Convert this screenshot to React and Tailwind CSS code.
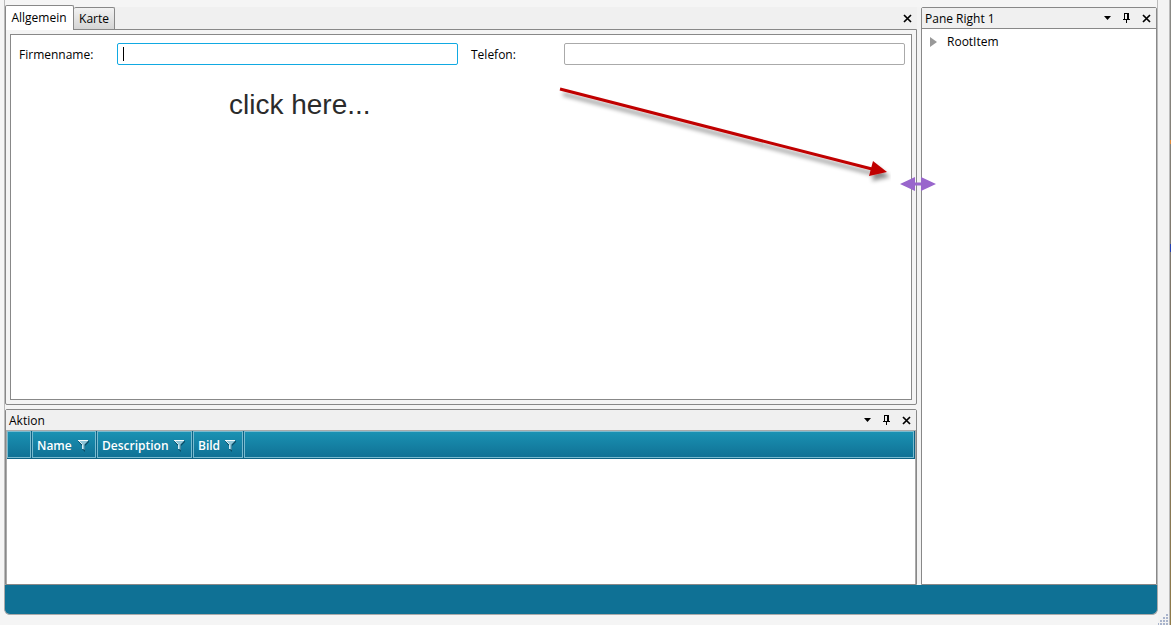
import React from "react";

const CloseIcon = () => (
  <svg width="9" height="9" viewBox="0 0 9 9" fill="none" stroke="#000" strokeWidth="1.7">
    <path d="M1 1l7 7M8 1L1 8" />
  </svg>
);

const PinIcon = () => (
  <svg width="7" height="10" viewBox="0 0 7 10" shapeRendering="crispEdges">
    <path d="M1 0h5v6h1v1H4v3H3V7H0V6h1zM2 1v5h2V1z" fill="#000" fillRule="evenodd" />
  </svg>
);

const CaretIcon = () => (
  <svg width="7" height="4" viewBox="0 0 7 4">
    <path d="M0 0h7L3.5 4z" fill="#000" />
  </svg>
);

const FilterIcon = () => (
  <svg width="11" height="12" viewBox="0 0 11 12">
    <path d="M0 1h11v1L7 6v6L4 9V6z" fill="#0b4d66" />
    <path d="M1 1h9L6.500 4.500V10L4.500 8.500v-4z" fill="#8cc3d6" />
    <path d="M0 0h10v1H0z" fill="#f2fafc" />
    <path d="M1 1l3.500 3.500V9" fill="none" stroke="#d5ebf2" />
  </svg>
);

const PaneHeader = ({ title }) => (
  <div className="flex h-5 items-center justify-between bg-[#f0f0f0] pr-[5px] pl-[3px]">
    <h2 className="pt-0.5">{title}</h2>
    <div className="flex items-center gap-3">
      <button type="button" aria-label="Menu" className="flex h-4 items-center">
        <CaretIcon />
      </button>
      <button type="button" aria-label="Pin" className="flex h-4 items-center">
        <PinIcon />
      </button>
      <button type="button" aria-label="Close" className="flex h-4 items-center">
        <CloseIcon />
      </button>
    </div>
  </div>
);

const columns = [
  { label: "Name", width: "w-[65px]" },
  { label: "Description", width: "w-24" },
  { label: "Bild", width: "w-[51px]" },
];

const headCell = "border-r border-b border-[#0d6385] shadow-[inset_0_0_0_1px_#79bbd0]";

const ActionGrid = () => (
  <table className="w-full table-fixed border-separate border-spacing-0">
    <thead>
      <tr className="h-7 bg-linear-to-b from-[#1b93b4] to-[#0f6f93] text-left text-white">
        <th className={`${headCell} w-[25px]`} aria-label="Row" />
        {columns.map((col) => (
          <th key={col.label} className={`${headCell} ${col.width} pt-0.5 pr-[7px] pb-0 pl-[5px] font-semibold`}>
            <span className="flex items-center justify-between">
              {col.label}
              <FilterIcon />
            </span>
          </th>
        ))}
        <th className={headCell} aria-label="Filler" />
      </tr>
    </thead>
  </table>
);

const ArrowNote = () => (
  <svg
    className="pointer-events-none absolute top-12 right-5"
    width="340"
    height="104"
    viewBox="0 0 340 104"
  >
    <defs>
      <filter id="shadow" x="-10%" y="-20%" width="120%" height="150%">
        <feDropShadow dx="3" dy="5" stdDeviation="2" floodColor="#000" floodOpacity="0.45" />
      </filter>
    </defs>
    <g filter="url(#shadow)">
      <path d="M9 6l312 80" stroke="#c00000" strokeWidth="3" />
      <path d="M322 78l14 11-18 4z" fill="#c00000" />
    </g>
  </svg>
);

const MainPanel = () => (
  <section className="flex min-h-0 flex-1 flex-col">
    <div className="flex h-[22px] items-end bg-[#f0f0f0]" role="tablist">
      <button
        type="button"
        role="tab"
        aria-selected="true"
        className="relative z-10 -mt-1 -mb-px h-[25px] w-[69px] rounded-t-xs border border-b-0 border-[#888] bg-white pr-px"
      >
        Allgemein
      </button>
      <button
        type="button"
        role="tab"
        aria-selected="false"
        className="h-[22px] w-[41px] rounded-t-xs border border-b-0 border-l-0 border-[#888] bg-linear-to-b from-[#f2f2f2] to-[#d5d5d5]"
      >
        Karte
      </button>
      <button type="button" aria-label="Close" className="mr-[5px] ml-auto flex h-[22px] items-center">
        <CloseIcon />
      </button>
    </div>
    <div className="flex flex-1 rounded-b-xs border border-[#888] bg-[#f4f4f4] p-1">
      <div className="relative flex-1 border border-[#888] bg-white px-[6px] py-2">
        <form className="flex items-center pl-[2px]">
          <label htmlFor="company" className="w-[98px] shrink-0 pt-0.5">
            Firmenname:
          </label>
          <div className="relative flex min-w-0 flex-1">
            <input
              id="company"
              type="text"
              className="h-[22px] w-full rounded-xs border border-[#11a9e2] px-1 outline-none"
            />
            <span className="absolute top-1 left-[6px] h-[14px] w-px bg-black" />
          </div>
          <label htmlFor="phone" className="ml-[13px] w-[93px] shrink-0 pt-0.5">
            Telefon:
          </label>
          <div className="flex min-w-0 flex-1">
            <input
              id="phone"
              type="text"
              className="h-[22px] w-full rounded-xs border border-[#aaa] px-1 outline-none"
            />
          </div>
        </form>
        <p className="mt-6 ml-[212px] font-['Liberation_Sans',Arial,sans-serif] text-[28px] leading-8 text-[#2b2b2b]">
          click here...
        </p>
        <ArrowNote />
      </div>
    </div>
  </section>
);

const ActionPanel = () => (
  <section className="flex h-[176px] flex-col rounded-t-xs border border-[#888] bg-white">
    <PaneHeader title="Aktion" />
    <div className="flex-1 border border-b-0 border-[#aaa]">
      <ActionGrid />
    </div>
  </section>
);

const RightPanel = () => (
  <aside className="flex w-[236px] flex-col rounded-t-xs border border-[#888] bg-white">
    <PaneHeader title="Pane Right 1" />
    <ul className="border-t border-[#888] pt-1">
      <li className="flex h-[18px] items-center gap-[10px] pl-2">
        <button type="button" aria-label="Expand">
          <svg width="7" height="10" viewBox="0 0 7 10">
            <path d="M0 0l7 5-7 5z" fill="#999" />
          </svg>
        </button>
        RootItem
      </li>
    </ul>
  </aside>
);

const Splitter = () => (
  <div className="relative w-1 bg-[#f3f3f3]">
    <svg className="absolute top-[170px] -left-[17px] z-20" width="36" height="14" viewBox="0 0 36 14">
      <path d="M0 7L15 0v5.500h6V0l15 7-15 7V8.500h-6V14z" fill="#9966cc" />
    </svg>
  </div>
);

const ResizeGrip = () => (
  <svg width="11" height="11" viewBox="0 0 11 11" fill="#a9b4cc" shapeRendering="crispEdges">
    <path d="M8 0h2v2H8zM5 3h2v2H5zM8 3h2v2H8zM2 6h2v2H2zM5 6h2v2H5zM8 6h2v2H8zM0 9h1v2H0zM2 9h2v2H2zM5 9h2v2H5zM8 9h2v2H8z" />
  </svg>
);

const App = () => (
  <div className="flex min-h-screen bg-[#f5f5f5] pl-1 font-['Open_Sans','Segoe_UI',sans-serif] text-[12px] leading-4 text-black">
    <div className="flex flex-1 flex-col">
      <main className="flex flex-1 border-r border-l border-[#bbb] pt-[7px]">
        <div className="flex min-w-0 flex-1 flex-col gap-1">
          <MainPanel />
          <ActionPanel />
        </div>
        <Splitter />
        <RightPanel />
      </main>
      <footer className="mb-[10px] h-[30px] rounded-b-md border border-t-0 border-[#aaa] bg-[#0f7195]" />
    </div>
    <div className="flex w-3 items-end border-r border-[#bbb] bg-[#f3f3f3]">
      <ResizeGrip />
    </div>
    <div className="flex w-px flex-col bg-linear-to-b from-[#8a8a86] via-[#7d7568] to-[#8f7a48]">
      <span className="mt-[140px] h-1 bg-[#e08a3a]" />
      <span className="mt-[100px] h-2 bg-[#2540b0]" />
    </div>
  </div>
);

export default App;
